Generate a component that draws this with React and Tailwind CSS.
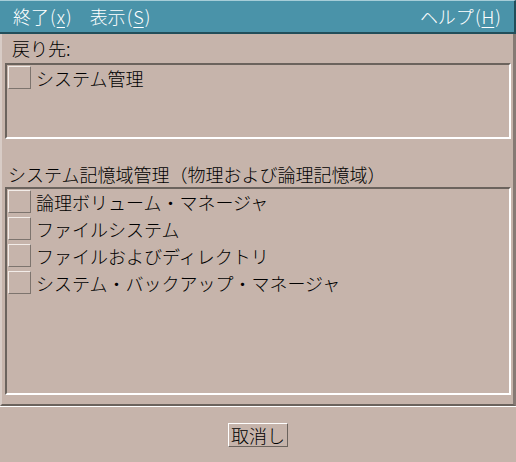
import React from 'react';

const font = { fontFamily: '"Noto Sans CJK JP", "Noto Sans", sans-serif' };

const Mnemonic = ({ label, keyChar }) => (
  <span className="flex items-center">
    {label}
    <span className="px-px">(</span>
    <span className="underline underline-offset-[3px]">{keyChar}</span>
    <span className="px-px">)</span>
  </span>
);

const CheckRow = ({ label }) => (
  <div className="flex items-center h-[23px] gap-[5px]">
    <div className="w-[23px] h-[23px] shrink-0 border-t border-l border-[#f2ece8] border-r border-b border-r-[#7d746e] border-b-[#7d746e]" />
    <span className="text-[18px] leading-none text-black whitespace-nowrap">{label}</span>
  </div>
);

const ListBox = ({ items, height }) => (
  <div
    className={`${height} border-t-2 border-l-2 border-[#6b635d] border-r-2 border-b-2 border-r-white border-b-white pt-px pl-px flex flex-col gap-[4px]`}
  >
    {items.map((item) => (
      <CheckRow key={item} label={item} />
    ))}
  </div>
);

export default function App() {
  const storageItems = [
    '論理ボリューム・マネージャ',
    'ファイルシステム',
    'ファイルおよびディレクトリ',
    'システム・バックアップ・マネージャ',
  ];

  return (
    <div className="w-[516px] h-[462px] bg-[#c6b4ab] flex flex-col overflow-hidden font-light" style={font}>
      {/* Menu bar */}
      <div className="h-[34px] shrink-0 bg-[#4a93a9] border-t border-[#a6cdd8] border-b-2 border-b-[#214e5a] border-r-2 border-r-[#214e5a] flex items-center justify-between pl-[13px] pr-[12px] text-white text-[18px]">
        <div className="flex items-center gap-[17px]">
          <Mnemonic label="終了" keyChar="x" />
          <Mnemonic label="表示" keyChar="S" />
        </div>
        <Mnemonic label="ヘルプ" keyChar="H" />
      </div>

      {/* Main frame */}
      <div className="h-[372px] shrink-0 border-l-2 border-[#d8ccc6] border-r-[3px] border-r-[#857a74] border-b-2 border-b-[#6b635d] pl-[3px] pr-[2px] flex flex-col">
        <div className="h-[29px] flex items-center pl-[7px] text-[18px] text-black">戻り先:</div>
        <ListBox items={['システム管理']} height="h-[76px]" />
        <div className="mt-[22px] h-[26px] flex items-center pl-[3px] text-[18px] text-black whitespace-nowrap">
          システム記憶域管理（物理および論理記憶域）
        </div>
        <ListBox items={storageItems} height="h-[208px]" />
      </div>

      {/* Bottom buttons */}
      <div className="flex-1 border-t border-white flex items-center justify-center">
        <button className="w-[60px] h-[24px] border-t border-l border-white border-r border-b border-r-[#6b635d] border-b-[#6b635d] text-[18px] leading-none text-black flex items-center justify-center">
          取消し
        </button>
      </div>
    </div>
  );
}
